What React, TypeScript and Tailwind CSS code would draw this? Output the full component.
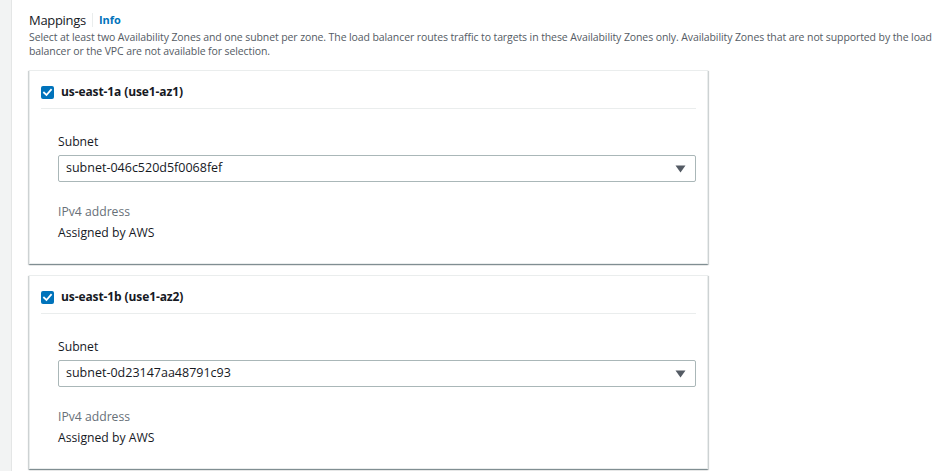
import React from "react";

interface ZoneCardProps {
  zone: string;
  subnet: string;
}

function CheckBox() {
  return (
    <span className="flex h-[13px] w-[13px] items-center justify-center rounded-[2px] bg-[#0073bb]">
      <svg width="11" height="11" viewBox="0 0 11 11" fill="none">
        <path d="M2 5.6 L4.5 8 L9 2.8" stroke="white" strokeWidth="1.8" strokeLinecap="square" />
      </svg>
    </span>
  );
}

function ZoneCard({ zone, subnet }: ZoneCardProps) {
  return (
    <div className="w-[679px] border border-[#eaeded] bg-white px-[11px] shadow-[0_1px_1px_0_rgba(0,28,36,0.3),1px_1px_1px_0_rgba(0,28,36,0.15),-1px_1px_1px_0_rgba(0,28,36,0.15)]">
      {/* header */}
      <div className="flex items-center gap-[7px] border-b border-[#eaeded] pt-[13px] pb-[8px]">
        <CheckBox />
        <span className="text-[12px] font-bold leading-[16px] tracking-[-0.1px] text-[#16191f]">{zone}</span>
      </div>

      {/* body */}
      <div className="pl-[17px] pt-[24px] pb-[20px]">
        <div className="text-[12.2px] leading-[18px] text-[#16191f]">Subnet</div>
        <div className="mt-[4px] flex h-[27px] items-center justify-between rounded-[2px] border border-[#aab7b8] pl-[7px] pr-[9px]">
          <span className="text-[12.5px] text-[#16191f]">{subnet}</span>
          <svg width="11" height="8" viewBox="0 0 11 8">
            <path d="M0.5 0.5 H10.5 L5.5 7.5 Z" fill="#545b64" />
          </svg>
        </div>
        <div className="mt-[19px] text-[12.2px] leading-[21px] text-[#687078]">IPv4 address</div>
        <div className="text-[12.2px] leading-[21px] text-[#16191f]">Assigned by AWS</div>
      </div>
    </div>
  );
}

export default function App() {
  return (
    <div
      className="flex h-[471px] w-[940px] overflow-hidden bg-white"
      style={{ fontFamily: '"Open Sans", "Noto Sans", sans-serif' }}
    >
      <div className="w-[12px] shrink-0 border-r border-[#e4e6e6] bg-[#f2f3f3]" />
      <div className="flex-1 pl-[17px] pt-[10px]">
        <div className="flex items-center">
          <span className="text-[13px] leading-[20px] tracking-[-0.3px] text-[#16191f]">Mappings</span>
          <span className="mx-[6px] h-[14px] w-px bg-[#eaeded]" />
          <span className="text-[11px] font-bold leading-[20px] text-[#0073bb]">Info</span>
        </div>
        <p className="whitespace-nowrap text-[10.5px] leading-[14px] tracking-[-0.1px] text-[#545b64]">
          Select at least two Availability Zones and one subnet per zone. The load balancer routes traffic to targets in
          these Availability Zones only. Availability Zones that are not supported by the load
          <br />
          balancer or the VPC are not available for selection.
        </p>
        <div className="mt-[12px] flex flex-col gap-[11px]">
          <ZoneCard zone="us-east-1a (use1-az1)" subnet="subnet-046c520d5f0068fef" />
          <ZoneCard zone="us-east-1b (use1-az2)" subnet="subnet-0d23147aa48791c93" />
        </div>
      </div>
    </div>
  );
}
